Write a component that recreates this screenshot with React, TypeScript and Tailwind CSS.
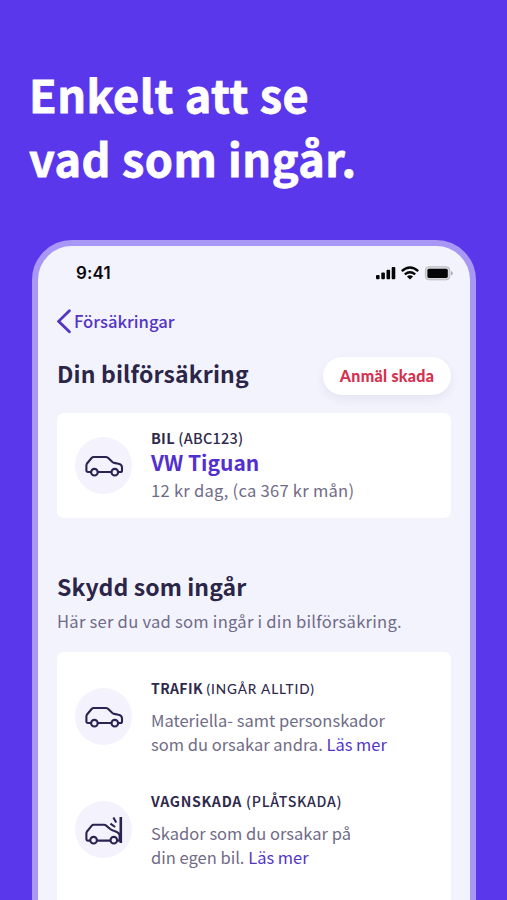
import type { ReactNode } from 'react';

const sans = "font-['Noto_Sans_CJK_SC','Noto_Sans',sans-serif]";

function CarIcon() {
  return (
    <svg width="40" height="24" viewBox="0 0 40 24" fill="none" stroke="#2b2350" strokeWidth="2.1" strokeLinejoin="round" strokeLinecap="round">
      <path d="M6.6 18H4Q2.4 18 2.4 16.4V11.6Q2.4 10.4 3 9.5L7.6 4Q8.5 3 9.8 3H21.8Q23 3 24 3.8L28.4 8Q29.2 8.7 30.3 8.9L34.4 9.7Q37.8 10.3 38 13.2V16.4Q38 18 36.4 18H34.6M14.2 18H26.8" />
      <circle cx="10.4" cy="18.2" r="3.3" />
      <circle cx="30.8" cy="18.2" r="3.3" />
    </svg>
  );
}

function CrashIcon() {
  return (
    <svg width="40" height="30" viewBox="0 0 40 30" fill="none" stroke="#2b2350" strokeWidth="2.1" strokeLinejoin="round" strokeLinecap="round">
      <path d="M5.4 25.6H4Q2.4 25.6 2.4 24V18.6Q2.4 17.4 3 16.5L7.6 10.8Q8.4 9.8 9.6 9.8H20Q21.2 9.8 22.2 10.6L26.2 14Q27.8 15.3 30.4 16.1Q34.4 17.2 35.6 19.8V25.6H33.8M13.4 25.6H25.8" />
      <circle cx="9.6" cy="25.2" r="3.3" />
      <circle cx="29.8" cy="25.2" r="3.3" />
      <path d="M36.8 2V28" strokeWidth="2.6" strokeLinecap="butt" />
      <path d="M29.4 2.6L32.2 7.6M26.4 8.6L31.2 12" strokeWidth="2.1" strokeLinecap="butt" />
    </svg>
  );
}

function IconDisc({ children }: { children: ReactNode }) {
  return <div className="flex h-[57px] w-[57px] shrink-0 items-center justify-center rounded-full bg-[#f4f3fd]">{children}</div>;
}

function StatusBar() {
  return (
    <div className="flex h-[21px] items-center justify-between pl-[19px]">
      <span className="font-['Inter',sans-serif] text-[17px] leading-5 font-semibold tracking-[0.15px] text-[#08070c]">9:41</span>
      <svg className="-mr-[2px]" width="78" height="16" viewBox="0 0 78 16">
        <g fill="#050508">
          <rect x="1" y="10" width="3.6" height="4.2" rx="1" />
          <rect x="6.3" y="7.6" width="3.6" height="6.6" rx="1" />
          <rect x="11.5" y="4.8" width="3.6" height="9.4" rx="1" />
          <rect x="16.7" y="2" width="3.6" height="12.2" rx="1" />
        </g>
        <g fill="none" stroke="#050508" strokeWidth="2.4">
          <path d="M26.8 6.1Q35-1.1 43.2 6.1" />
          <path d="M29.8 9.4Q35 5.1 40.2 9.4" />
        </g>
        <path d="M31.9 11.4Q35 8.9 38.1 11.4L35 14.6Z" fill="#050508" />
        <rect x="50.4" y="1.8" width="24.4" height="13" rx="3.4" fill="#d9d9df" stroke="#b9b9c2" />
        <rect x="52.4" y="3.7" width="20.4" height="9.2" rx="1.6" fill="#050508" />
        <path d="M76 6Q77.9 7 77.9 8.3T76 10.6Z" fill="#aaaab4" />
      </svg>
    </div>
  );
}

function Coverage({ icon, heading, lines }: { icon: ReactNode; heading: ReactNode; lines: [string, string] }) {
  return (
    <div className="flex gap-[19px]">
      <div className="pt-[10px]">
        <IconDisc>{icon}</IconDisc>
      </div>
      <div className="whitespace-nowrap">
        {heading}
        <p className="mt-[10px] text-[16.5px] leading-6 text-[#706c87]">
          {lines[0]}
          <br />
          {lines[1]} <a className="text-[#5335c4]">Läs mer</a>
        </p>
      </div>
    </div>
  );
}

export default function App() {
  return (
    <div className={`h-[900px] w-[507px] overflow-hidden bg-[#5b37eb] pt-[62px] ${sans}`}>
      <h1 className="h-[178px] pl-[29px] text-[45px] leading-[64px] font-bold tracking-[0.55px] whitespace-nowrap text-white [-webkit-text-stroke:0.8px_white]">
        Enkelt att se
        <br />
        vad som ingår.
      </h1>
      <main className="ml-[32px] h-[720px] w-[444px] rounded-t-[40px] border-6 border-[#a997f5] bg-[#f3f3fd] px-[19px] pt-[16px]">
        <StatusBar />
        <div className="mt-[26px] flex h-[24px] items-center text-[16.6px] leading-6 font-medium whitespace-nowrap text-[#5335c4]">
          <svg width="17" height="26" viewBox="0 0 17 26" fill="none" stroke="#5335c4" strokeWidth="2.8" strokeLinecap="round">
            <path d="M12.4 2.8L1.6 13.3L12.4 23.8" />
          </svg>
          Försäkringar
        </div>
        <div className="mt-[24px] flex h-[38px] items-center justify-between">
          <h2 className="-mt-[6px] text-[23px] leading-8 font-bold tracking-[0.15px] whitespace-nowrap text-[#2b2547]">Din bilförsäkring</h2>
          <button className="h-[38px] w-[128px] rounded-full bg-white font-['Lato',sans-serif] text-[16px] font-black tracking-[0.3px] whitespace-nowrap text-[#d5304f] shadow-[0_4px_10px_rgba(60,50,110,0.08)]">
            Anmäl skada
          </button>
        </div>
        <section className="mt-[18px] flex h-[105px] gap-[19px] rounded-[7px] bg-white pl-[18px]">
          <div className="pt-[24px]">
            <IconDisc>
              <CarIcon />
            </IconDisc>
          </div>
          <div className="pt-[15px] whitespace-nowrap">
            <div className="text-[14.5px] leading-5 tracking-[0.25px] text-[#2f2a4c]">
              <b>BIL</b> <span className="font-medium">(ABC123)</span>
            </div>
            <div className="text-[21px] leading-7 font-bold text-[#5230cf]">VW Tiguan</div>
            <div className="text-[16.6px] leading-7 tracking-[0.25px] text-[#706c87]">12 kr dag, (ca 367 kr mån)</div>
          </div>
        </section>
        <h2 className="mt-[52px] text-[23px] leading-8 font-bold tracking-[0.1px] whitespace-nowrap text-[#2b2547]">Skydd som ingår</h2>
        <p className="mt-[7px] text-[16.6px] leading-6 tracking-[0.24px] whitespace-nowrap text-[#706c87]">Här ser du vad som ingår i din bilförsäkring.</p>
        <section className="mt-[19px] flex h-[300px] flex-col gap-[35px] rounded-[7px] bg-white pt-[26px] pl-[18px]">
          <Coverage
            icon={<CarIcon />}
            heading={
              <div className="h-[20px] text-[14px] leading-5 tracking-[0.4px] text-[#2f2a4c]">
                <b>TRAFIK</b> <span className="font-['Lato',sans-serif] text-[13.6px] font-medium tracking-[0.85px]">(INGÅR ALLTID)</span>
              </div>
            }
            lines={['Materiella- samt personskador', 'som du orsakar andra.']}
          />
          <Coverage
            icon={<CrashIcon />}
            heading={
              <div className="h-[20px] text-[14.2px] leading-5 tracking-[0.7px] text-[#2f2a4c]">
                <b>VAGNSKADA</b> <span className="font-medium">(PLÅTSKADA)</span>
              </div>
            }
            lines={['Skador som du orsakar på', 'din egen bil.']}
          />
        </section>
      </main>
    </div>
  );
}
